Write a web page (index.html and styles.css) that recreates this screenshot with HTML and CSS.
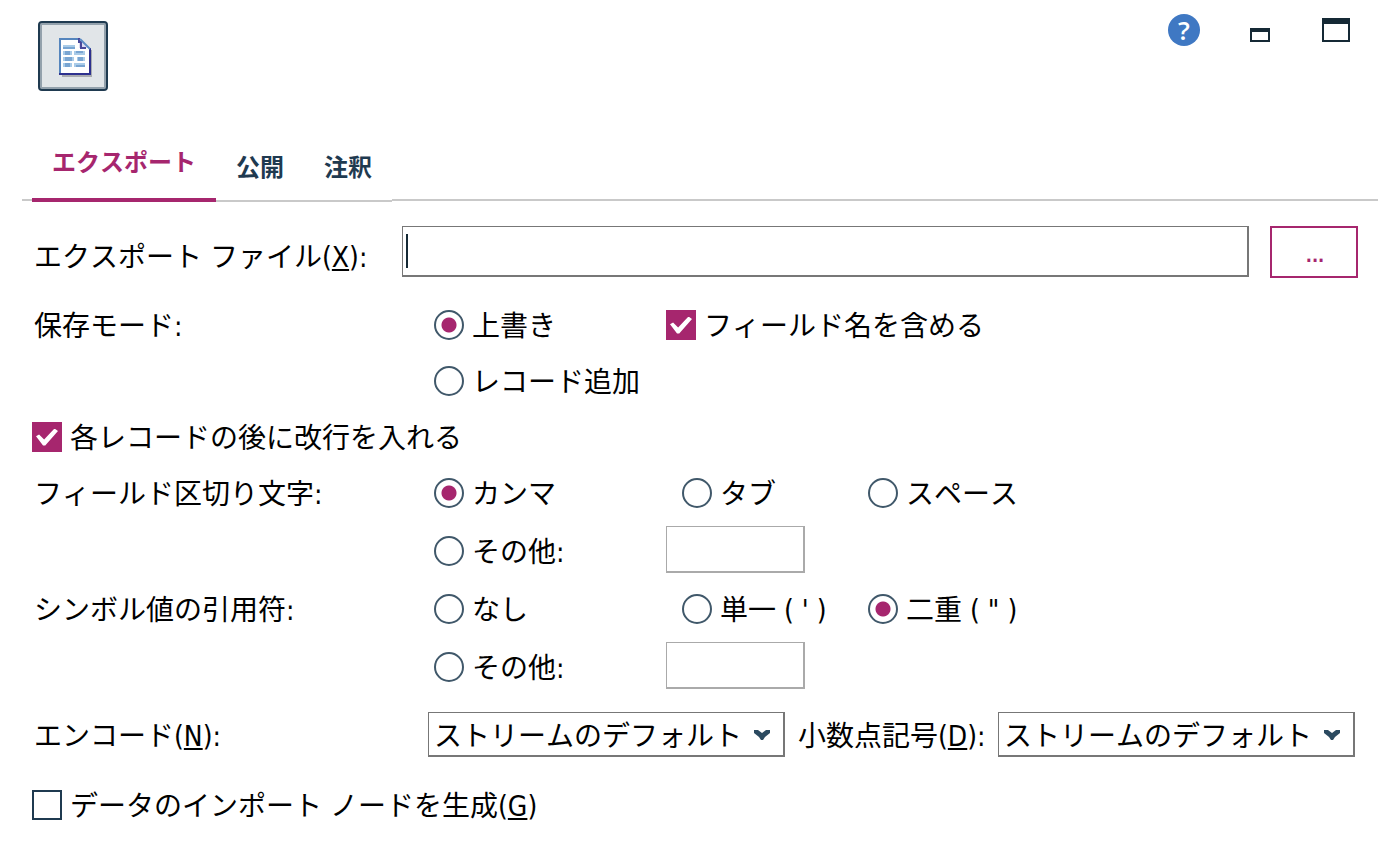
FILE: index.html
```html
<!DOCTYPE html>
<html lang="ja">
<head>
<meta charset="utf-8">
<title>エクスポート</title>
<link rel="stylesheet" href="styles.css">
</head>
<body>
<header class="header">
  <button class="node-button" type="button" aria-label="ノード">
    <svg width="34" height="40" viewBox="0 0 34 40" aria-hidden="true">
      <path d="M4 38h28V13h2v27H4z" fill="#a9abb0"/>
      <path d="M2 2h20l10 10v25H2z" fill="#fff"/>
      <path d="M2 37V2h20" fill="none" stroke="#5585bd" stroke-width="2"/>
      <path d="M1 37h31V11" fill="none" stroke="#2e318f" stroke-width="2"/>
      <path d="M21 2v9h10z" fill="#dcdcf2"/>
      <path d="M21 1v4h2v6h5" fill="none" stroke="#47479b" stroke-width="2"/>
      <path d="M22 2l10 10" stroke="#5c8cc4" stroke-width="2"/>
      <path d="M5 8h12v4H5zM5 14h9v4H5zM16 14h11v4H16zM5 20h11v4H5zM19 20h8v4h-8zM5 26h9v4H5zM16 26h11v4H16z" fill="#a9cbe8"/>
      <path d="M5 10h12v2H5zM7 14h5v4H7zM18 14h7v2h-7zM7 20h7v4H7zM20 20h5v4h-5zM7 26h5v4H7zM18 28h9v2h-9z" fill="#79a5d2"/>
    </svg>
  </button>
  <div class="window-buttons">
    <button class="help" type="button" aria-label="ヘルプ">?</button>
    <button class="win win-min" type="button" aria-label="最小化"></button>
    <button class="win win-max" type="button" aria-label="最大化"></button>
  </div>
</header>

<nav class="tabs" role="tablist">
  <button class="tab tab-active" type="button" role="tab" aria-selected="true">エクスポート</button>
  <button class="tab" type="button" role="tab" aria-selected="false">公開</button>
  <button class="tab" type="button" role="tab" aria-selected="false">注釈</button>
</nav>

<form class="form">
  <div class="file-row">
    <label class="label file-label" for="file">エクスポート ファイル(<u>X</u>):</label>
    <span class="file-box"><input class="text-box" id="file" type="text"></span>
    <button class="browse" type="button">...</button>
  </div>

  <div class="options">
    <span class="label row-label">保存モード:</span>
    <label class="choice at-first"><input class="radio" type="radio" name="mode" checked>上書き</label>
    <label class="choice at-field"><input class="check" type="checkbox" checked>フィールド名を含める</label>
    <label class="choice at-first"><input class="radio" type="radio" name="mode">レコード追加</label>
    <label class="choice at-start"><input class="check" type="checkbox" checked>各レコードの後に改行を入れる</label>

    <span class="label row-label">フィールド区切り文字:</span>
    <label class="choice at-first"><input class="radio" type="radio" name="delimiter" checked>カンマ</label>
    <label class="choice at-second"><input class="radio" type="radio" name="delimiter">タブ</label>
    <label class="choice"><input class="radio" type="radio" name="delimiter">スペース</label>
    <label class="choice at-first"><input class="radio" type="radio" name="delimiter">その他:</label>
    <input class="text-box small-box at-field" type="text" aria-label="区切り文字 その他" disabled>

    <span class="label row-label">シンボル値の引用符:</span>
    <label class="choice at-first"><input class="radio" type="radio" name="quote">なし</label>
    <label class="choice at-second"><input class="radio" type="radio" name="quote">単一 ( ' )</label>
    <label class="choice"><input class="radio" type="radio" name="quote" checked>二重 ( " )</label>
    <label class="choice at-first"><input class="radio" type="radio" name="quote">その他:</label>
    <input class="text-box small-box at-field" type="text" aria-label="引用符 その他" disabled>
  </div>

  <div class="encode-row">
    <label class="label encode-label" for="encode">エンコード(<u>N</u>):</label>
    <span class="select-box">
      <select class="select" id="encode"><option>ストリームのデフォルト</option></select>
      <svg class="arrow" width="16" height="10" viewBox="0 0 16 10" aria-hidden="true"><path d="M0 0h4l4 3 4-3h4v3l-5 4-2 3H7L5 7 0 3z" fill="#2b4a60"/></svg>
    </span>
    <label class="decimal-label" for="decimal">小数点記号(<u>D</u>):</label>
    <span class="select-box">
      <select class="select" id="decimal"><option>ストリームのデフォルト</option></select>
      <svg class="arrow" width="16" height="10" viewBox="0 0 16 10" aria-hidden="true"><path d="M0 0h4l4 3 4-3h4v3l-5 4-2 3H7L5 7 0 3z" fill="#2b4a60"/></svg>
    </span>
  </div>

  <label class="choice generate"><input class="check" type="checkbox"><span>データのインポート ノードを生成(<u>G</u>)</span></label>
</form>
</body>
</html>
```

FILE: styles.css
```css
* { box-sizing: border-box; }

body,
button,
input,
select {
  font-family: "DejaVu Sans Condensed", "Noto Sans CJK JP", sans-serif;
  font-size: 28px;
  line-height: 40px;
  font-kerning: none;
}

body {
  margin: 0;
  background: #fff;
  color: #000;
}

button {
  padding: 0;
  border: 0;
  background: none;
}

u {
  text-decoration-thickness: 2px;
  text-underline-offset: 2px;
  text-decoration-skip-ink: none;
}

.header {
  display: flex;
  justify-content: space-between;
  align-items: flex-start;
  padding: 14px 48px 0 38px;
}

.node-button {
  display: flex;
  align-items: center;
  justify-content: center;
  width: 70px;
  height: 70px;
  margin-top: 7px;
  padding: 2px 0 0 4px;
  border: 2px solid #1f3a50;
  border-radius: 4px;
  background: #e1e5e8;
  box-shadow: inset 0 0 0 2px #93a1ac;
}

.window-buttons {
  display: flex;
  align-items: flex-start;
}

.help {
  width: 32px;
  height: 32px;
  margin-right: 50px;
  border-radius: 50%;
  background: #3f78c3;
  color: #fff;
  font-family: "Open Sans", sans-serif;
  font-size: 26px;
  font-weight: 600;
  line-height: 30px;
}

.win {
  border: 2px solid #152935;
}

.win-min {
  width: 20px;
  height: 14px;
  margin: 14px 52px 0 0;
  border-top-width: 4px;
}

.win-max {
  width: 28px;
  height: 24px;
  margin-top: 4px;
  border-top-width: 6px;
}

.tabs {
  display: flex;
  align-items: flex-end;
  margin: 52px 20px 0 22px;
}

.tabs::before,
.tabs::after {
  content: "";
  flex: 0 0 10px;
  margin-bottom: 1px;
  border-bottom: 2px solid #c9c9c9;
}

.tabs::after { flex: 1; }

.tab {
  padding: 0 20px 12px;
  border-bottom: 2px solid #c9c9c9;
  color: #1f3a50;
  font-size: 24px;
  font-weight: 700;
}

.tab-active {
  padding-bottom: 15px;
  border-bottom: 4px solid #a6266e;
  color: #a6266e;
}

.form { padding: 24px 40px 0 32px; }

.label { padding-left: 2px; }

.file-row {
  display: flex;
  align-items: flex-start;
}

.file-label { flex: 0 0 370px; padding-top: 12px; }

.file-box {
  position: relative;
  display: flex;
  flex: 1;
}

.file-box::after {
  content: "";
  position: absolute;
  left: 4px;
  top: 8px;
  width: 2px;
  height: 34px;
  background: #152935;
}

.text-box {
  flex: 1;
  min-width: 0;
  height: 51px;
  padding: 0 6px;
  border: solid #777;
  border-width: 1px 2px 2px 1px;
  border-radius: 0;
  background: #fff;
  outline: 0;
}

.small-box {
  width: 139px;
  height: 47px;
  margin-bottom: 4px;
  border-color: #aaa;
}

.browse {
  width: 88px;
  height: 52px;
  margin-left: 21px;
  padding: 8px 0 0 2px;
  border: 2px solid #a6266e;
  color: #a6266e;
  font-size: 18px;
  font-weight: 700;
}

.options {
  display: grid;
  grid-template-columns: 402px 232px 16px 186px 1fr;
  grid-template-rows: 56px 56px 56px 56px 60px 56px 60px;
  align-items: center;
  margin-top: 19px;
}

.at-start { grid-column: 1 / span 2; }
.row-label { grid-column: 1; padding-top: 4px; }
.at-first { grid-column: 2; }
.at-field { grid-column: 3 / span 3; }
.at-second { grid-column: 4; }

.choice {
  display: flex;
  align-items: center;
  gap: 8px;
  padding-top: 4px;
  white-space: nowrap;
}

.radio,
.check {
  flex: none;
  appearance: none;
  width: 30px;
  height: 30px;
  margin: 0 0 4px;
  border: 2px solid #1f3a50;
  background: #fff;
}

.radio { border-color: #40586a; border-radius: 50%; }

.radio:checked {
  background: radial-gradient(circle, #a6266e 7px, #fff 8px);
}

.check { display: grid; }

.check:checked {
  border-color: #a6266e;
  background: #a6266e;
}

.check:checked::before {
  content: "";
  place-self: center;
  width: 22px;
  height: 17px;
  background: #fff;
  clip-path: polygon(0 45%, 14% 36%, 37% 65%, 84% 0, 100% 15%, 42% 100%, 32% 100%);
}

.encode-row {
  display: flex;
  align-items: center;
  margin-top: 15px;
  padding-right: 3px;
}

.encode-label { flex: 0 0 396px; padding-top: 5px; }

.decimal-label {
  flex: 0 0 200px;
  margin-left: 13px;
  padding-top: 4px;
}

.select-box {
  position: relative;
  display: flex;
  flex: 1;
}

.select {
  flex: 1;
  min-width: 0;
  height: 45px;
  padding: 4px 40px 0 5px;
  appearance: none;
  border: solid #777;
  border-width: 1px 2px 2px 1px;
  border-radius: 0;
  background: #fff;
  color: #000;
}

.arrow {
  position: absolute;
  right: 15px;
  top: 18px;
  pointer-events: none;
}

.generate { margin-top: 26px; }
```
